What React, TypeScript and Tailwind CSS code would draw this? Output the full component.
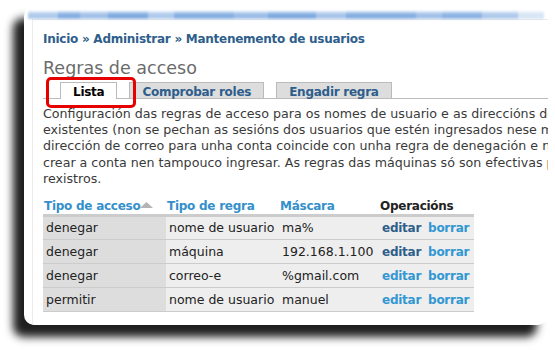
import React from 'react'

const rows = [
  { acceso: 'denegar', regra: 'nome de usuario', mascara: 'ma%', visited: true },
  { acceso: 'denegar', regra: 'máquina', mascara: '192.168.1.100', visited: true },
  { acceso: 'denegar', regra: 'correo-e', mascara: '%gmail.com', visited: false },
  { acceso: 'permitir', regra: 'nome de usuario', mascara: 'manuel', visited: false },
]

const lines = [
  'Configuración das regras de acceso para os nomes de usuario e as direccións de correo electrónico das contas novas e',
  'existentes (non se pechan as sesións dos usuarios que estén ingresados nese momento). Se un nome de usuario ou unha',
  'dirección de correo para unha conta coincide con unha regra de denegación e non con unha de permisión, non se permitirá',
  'crear a conta nen tampouco ingresar. As regras das máquinas só son efectivas para cada vista de páxina, non só para os',
  'rexistros.',
]

const bandSegments = [
  'w-[30px] opacity-60',
  'w-[22px] opacity-90',
  'w-[28px] opacity-70',
  'w-[40px] opacity-95',
  'w-[26px] opacity-60',
  'w-[60px] opacity-90',
  'w-[34px] opacity-75',
  'w-[48px] opacity-95',
  'w-[30px] opacity-65',
  'w-[70px] opacity-90',
  'w-[26px] opacity-70',
  'w-[40px] opacity-85',
  'w-[36px] opacity-60',
  'w-[26px] opacity-30',
]

const App = () => {
  return (
    <div className="w-[555px] h-[352px] bg-white overflow-hidden pt-[6px] pl-[24px] font-['DejaVu_Sans',sans-serif] text-[12.5px]">
      {/* card */}
      <div className="relative w-[524px] h-[319px] bg-white rounded-[10px] shadow-[-11px_12px_9px_rgba(0,0,0,0.88)] overflow-hidden flex flex-col">
        {/* blurred header strip */}
        <div className="mt-[5px] mx-[4px] h-[8px] flex blur-[1.2px]">
          {bandSegments.map((s, i) => (
            <div key={i} className={`${s} h-full bg-gradient-to-b from-[#d6e4f5] via-[#6e9fdb] to-[#8fb4e4]`} />
          ))}
        </div>

        <div className="flex-1 ml-[8px] border-l border-t border-[#ececec] pl-[10px] overflow-hidden">
          {/* breadcrumb */}
          <div className="mt-[11px] text-[12px] tracking-[-0.26px] leading-[16px] font-bold text-[#2e5e8c] whitespace-nowrap">
            Inicio » Administrar » Mantenemento de usuarios
          </div>

          <div className="mt-[11px] text-[17.5px] leading-[20px] text-[#6b6b6b]">Regras de acceso</div>

          {/* tabs */}
          <div className="relative mt-[4px]">
            <div className="flex pl-[17px] border-b border-[#bbbbbb] h-[17px] text-[12px] tracking-[-0.26px] font-bold">
              <div className="h-[17px] px-[12px] pt-[2px] leading-[14px] bg-white border border-b-0 border-[#bbbbbb] text-black mr-[12px]">
                Lista
              </div>
              <div className="h-[16px] px-[12px] pt-[2px] leading-[14px] bg-[#dddddd] border border-b-0 border-[#bbbbbb] text-[#2e5e8c] mr-[12px]">
                Comprobar roles
              </div>
              <div className="h-[16px] px-[12px] pt-[2px] leading-[14px] bg-[#dddddd] border border-b-0 border-[#bbbbbb] text-[#2e5e8c]">
                Engadir regra
              </div>
            </div>
            {/* annotation */}
            <div className="absolute left-[3px] top-[-5px] w-[90px] h-[31px] border-[3px] border-[#e60000] rounded-[5px]" />
          </div>

          {/* description */}
          <div className="mt-[7px] text-[12.65px] leading-[16.2px] text-[#3a3a3a]">
            {lines.map((l, i) => (
              <div key={i} className="whitespace-nowrap">
                {l}
              </div>
            ))}
          </div>

          {/* table */}
          <table className="mt-[11px] w-[431px] table-fixed border-collapse">
            <colgroup>
              <col className="w-[123px]" />
              <col className="w-[113px]" />
              <col className="w-[100px]" />
              <col className="w-[95px]" />
            </colgroup>
            <thead className="text-[12px] tracking-[-0.26px]">
              <tr className="border-b-[3px] border-[#cccccc]">
                <th className="text-left font-bold leading-[16px] pl-[1px] text-[#3490cb] whitespace-nowrap">
                  <span className="inline-flex items-center">
                    Tipo de acceso
                    <svg width="13" height="6" viewBox="0 0 13 6" className="mb-[2px]">
                      <polygon points="0,6 6.5,0 13,6" fill="#b4b4b4" />
                    </svg>
                  </span>
                </th>
                <th className="text-left font-bold leading-[16px] pl-[1px] text-[#3490cb]">Tipo de regra</th>
                <th className="text-left font-bold leading-[16px] pl-[1px] text-[#3490cb]">Máscara</th>
                <th className="text-left font-bold leading-[16px] pl-[1px] text-[#222222]">Operacións</th>
              </tr>
            </thead>
            <tbody>
              {rows.map((r, i) => (
                <tr key={i} className="border-b border-[#cccccc] h-[24px] text-[#222222]">
                  <td className="bg-[#dddddd] px-[3px] leading-[14px] whitespace-nowrap">{r.acceso}</td>
                  <td className="bg-[#eeeeee] px-[3px] leading-[14px] whitespace-nowrap">{r.regra}</td>
                  <td className="bg-[#eeeeee] px-[3px] leading-[14px] whitespace-nowrap">{r.mascara}</td>
                  <td className="bg-[#eeeeee] px-[3px] leading-[14px] whitespace-nowrap font-bold text-[12px] tracking-[-0.26px]">
                    <span className={r.visited ? 'text-[#2e5e8c]' : 'text-[#3397d3]'}>editar</span>
                    <span className="text-[#3397d3] ml-[7px]">borrar</span>
                  </td>
                </tr>
              ))}
            </tbody>
          </table>
        </div>
      </div>
    </div>
  )
}

export default App
